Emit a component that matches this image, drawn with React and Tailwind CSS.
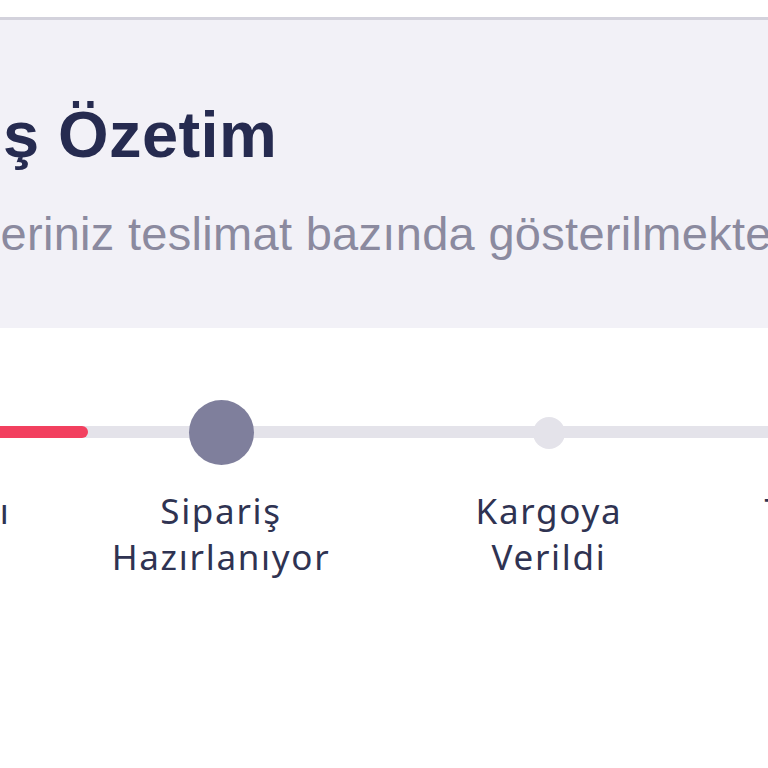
import React from "react";

const steps = [
  { label: ["Sipariş Alındı"], state: "done" },
  { label: ["Sipariş", "Hazırlanıyor"], state: "current" },
  { label: ["Kargoya", "Verildi"], state: "todo" },
  { label: ["Teslim Edildi"], state: "todo" },
];

function StepDot({ state }) {
  if (state === "current") {
    return <div className="w-[65px] h-[65px] rounded-full bg-[#7f7f9c]" />;
  }
  if (state === "done") {
    return <div className="w-[32px] h-[32px] rounded-full bg-[#f2405f]" />;
  }
  return <div className="w-[32px] h-[32px] rounded-full bg-[#e4e3ea]" />;
}

export default function App() {
  return (
    <div className="w-[768px] h-[768px] overflow-hidden bg-white">
      <div className="h-[17px] bg-white" />

      {/* Header panel */}
      <div className="border-t-[3px] border-[#d3d2dc] bg-[#f2f1f7] h-[311px] overflow-hidden">
        <div className="pt-[82px] font-['Liberation_Sans',Arial,sans-serif] whitespace-nowrap">
          <h1 className="ml-[-180px] text-[65px] leading-none font-bold tracking-[0.4px] text-[#262b50]">
            Sipariş Özetim
          </h1>
          <p className="ml-[-156px] mt-[43px] text-[47px] leading-none tracking-[0.3px] text-[#8b8a9f]">
            Siparişleriniz teslimat bazında gösterilmektedir
          </p>
        </div>
      </div>

      {/* Order status stepper */}
      <div className="relative mt-[72px] ml-[-271px] w-[1312px] font-['Noto_Sans',sans-serif]">
        <div className="absolute left-0 right-0 top-[26px] h-[12px] rounded-full bg-[#e4e3ea]">
          <div className="h-full w-[359px] rounded-full bg-[#f2405f]" />
        </div>
        <div className="relative flex">
          {steps.map((s, i) => (
            <div key={i} className="w-[328px] flex flex-col items-center">
              <div className="h-[65px] flex items-center justify-center">
                <StepDot state={s.state} />
              </div>
              <div className="mt-[23px] text-center text-[35px] leading-[46px] tracking-[1.7px] whitespace-nowrap text-[#2f3352]">
                {s.label.map((l) => (
                  <div key={l}>{l}</div>
                ))}
              </div>
            </div>
          ))}
        </div>
      </div>
    </div>
  );
}
